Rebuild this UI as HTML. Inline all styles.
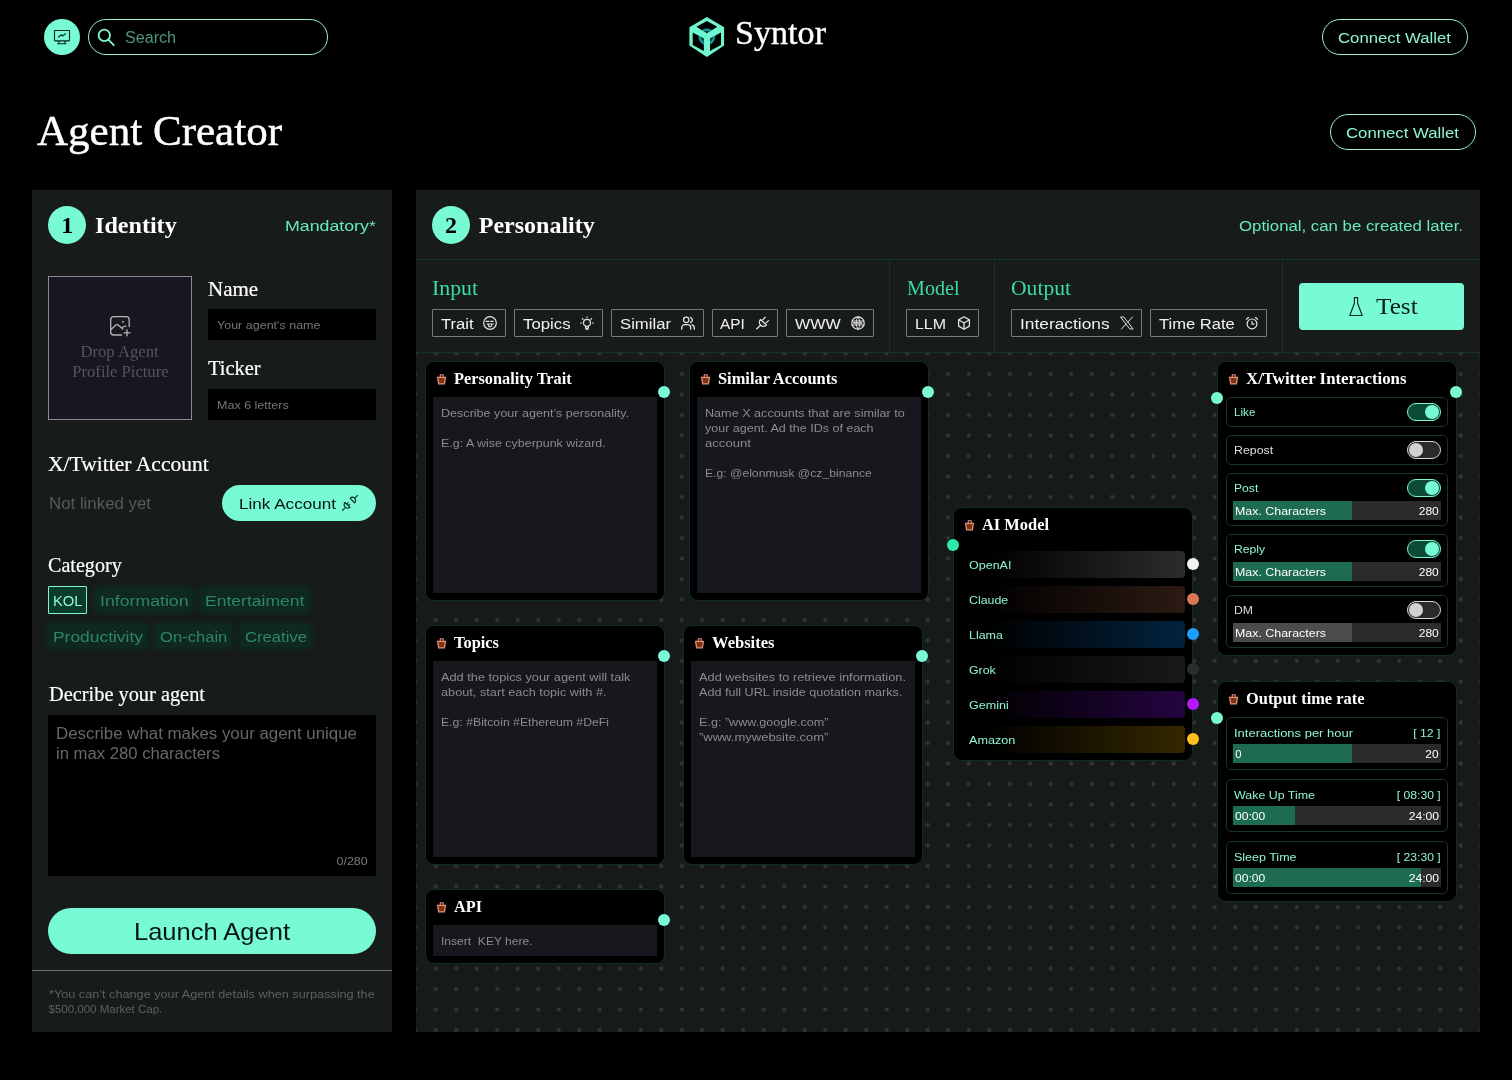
<!DOCTYPE html>
<html lang="en"><head><meta charset="utf-8"><title>Syntor – Agent Creator</title>
<style>
*{box-sizing:border-box;margin:0;padding:0}
html,body{width:1512px;height:1080px;background:#000;overflow:hidden}
body{position:relative;font-family:"Liberation Sans",sans-serif;color:#fff}
#app{position:absolute;left:0;top:0;width:1512px;height:1080px;will-change:transform}
#app div,#app svg,#app span.t{position:absolute}
.t{white-space:pre;display:block;transform-origin:left center}
.s{font-family:"Liberation Sans",sans-serif}
.f{font-family:"Liberation Serif",serif}
.pill{border:1px solid #9aefd6;border-radius:18px}
.tb{border:1px solid #777b7a;border-radius:1px}
.node{background:#000;border-radius:8px;box-shadow:0 0 0 1px #102c24}
.area{background:#17171e}
.port{width:12px;height:12px;border-radius:50%;background:#78fbd5}
.row{border:1px solid #16352b;border-radius:5px}
.bar{background:#2b2b2b}
</style></head><body><div id="app">
<div style="left:44px;top:19px;width:36px;height:36px;border-radius:50%;background:#78fbd5"></div>
<svg style="left:52px;top:28px" width="20" height="18" viewBox="52 28 20 18" fill="none" stroke="#08241b" stroke-width="1.1">
<rect x="54.5" y="30.5" width="15" height="10.4" rx="0.6"/>
<path d="M58.9 41v2.6M64.9 41v2.6M57.3 43.7h9.2" />
<path d="M58.3 37.2l3-2.4 1.4 1.2 3.2-2.6" stroke-width="1.2"/></svg>
<div class="pill" style="left:88px;top:19px;width:240px;height:36px;"></div>
<svg style="left:95px;top:27px" width="22" height="22" viewBox="95 27 22 22" fill="none" stroke="#86f6d6" stroke-width="1.8" stroke-linecap="round">
<circle cx="104.3" cy="35.4" r="5.7"/><path d="M108.6 39.8l5.2 5.4"/></svg>
<span class="t s" style="left:124.60px;top:28px;font-size:16px;line-height:20px;color:#4f957f;transform:scaleX(1.0059);">Search</span>
<svg style="left:686px;top:14px" width="42" height="46" viewBox="686 14 42 46">
<defs><radialGradient id="rg" cx="0.5" cy="0.5" r="0.5"><stop offset="0.45" stop-color="#0c5a5c" stop-opacity="0.25"/><stop offset="0.8" stop-color="#19b9b4"/><stop offset="1" stop-color="#19b9b4" stop-opacity="0"/></radialGradient></defs>
<polygon points="706.85,17.1 724.1,27.2 724.1,45.6 706.85,56.9 689.4,45.6 689.4,27.2" fill="#6ff6d0"/>
<g fill="#000">
<polygon points="696.4,26.75 706.85,21 717.3,26.75 706.85,33.3"/>
<polygon points="692.7,32.6 703.8,38.6 703.8,50.9 692.7,45"/>
<polygon points="710,38.6 721,32.6 721,45 710,50.9"/>
</g>
<clipPath id="faces"><polygon points="696.4,26.75 706.85,21 717.3,26.75 706.85,33.3"/><polygon points="692.7,32.6 703.8,38.6 703.8,50.9 692.7,45"/><polygon points="710,38.6 721,32.6 721,45 710,50.9"/></clipPath>
<circle cx="706.85" cy="36.8" r="9" fill="url(#rg)" clip-path="url(#faces)"/>
</svg>
<span class="t f" style="left:735.20px;top:13px;font-size:33px;line-height:41px;color:#fff;transform:scaleX(1.0339);-webkit-text-stroke:0.35px #fff;">Syntor</span>
<div class="pill" style="left:1322px;top:19px;width:146px;height:36px;"></div>
<span class="t s" style="left:1338.30px;top:28px;font-size:15.5px;line-height:19px;color:#8ef3d3;transform:scaleX(1.0801);">Connect Wallet</span>
<div class="pill" style="left:1330px;top:114px;width:146px;height:36px;"></div>
<span class="t s" style="left:1346.30px;top:123px;font-size:15.5px;line-height:19px;color:#8ef3d3;transform:scaleX(1.0801);">Connect Wallet</span>
<span class="t f" style="left:37.00px;top:105px;font-size:41.5px;line-height:52px;color:#fff;transform:scaleX(1.0371);-webkit-text-stroke:0.45px #fff;">Agent Creator</span>
<div style="left:32px;top:190px;width:360px;height:842px;background:#171b1a"></div>
<div style="left:48px;top:205.5px;width:38px;height:38px;border-radius:50%;background:#78fbd5"></div>
<span class="t f" style="left:61.20px;top:210px;font-size:24px;line-height:30px;color:#000;font-weight:700;">1</span>
<span class="t f" style="left:95.20px;top:210px;font-size:24px;line-height:30px;color:#fff;font-weight:700;transform:scaleX(1.0044);">Identity</span>
<span class="t s" style="left:284.50px;top:216px;font-size:15.5px;line-height:19px;color:#67eac2;transform:scaleX(1.1455);">Mandatory*</span>
<div style="left:48px;top:276px;width:144px;height:144px;background:#18171f;border:1px solid #8a8a8a"></div>
<svg style="left:108px;top:314px" width="24" height="24" viewBox="108 314 24 24" fill="none" stroke="#b4b4b8" stroke-width="1.3" stroke-linecap="round" stroke-linejoin="round">
<path d="M121.5 335h-7.8a3 3 0 0 1-3-3v-12.3a3 3 0 0 1 3-3h12.5a3 3 0 0 1 3 3v6.8"/>
<path d="M111 329.6l5.3-4.9c.5-.45 1.1-.45 1.6 0l4.9 4.3M122.3 327.6c1-1.1 2.2-1.5 3.5-1.4"/>
<circle cx="123" cy="321.8" r="0.6" fill="#b4b4b8" stroke-width="0.8"/>
<path d="M127 329.8v6M124 332.8h6" stroke-width="1.3"/></svg>
<span class="t f" style="left:82.45px;top:342px;font-size:16px;line-height:20px;color:#54545e;transform:scaleX(1.0425);transform-origin:center center;">Drop Agent</span>
<span class="t f" style="left:73.56px;top:362px;font-size:16px;line-height:20px;color:#54545e;transform:scaleX(1.0358);transform-origin:center center;">Profile Picture</span>
<span class="t f" style="left:208.00px;top:276px;font-size:20.7px;line-height:26px;color:#fff;transform:scaleX(1.0161);-webkit-text-stroke:0.2px #fff;">Name</span>
<div style="left:208px;top:309px;width:168px;height:31px;background:#000"></div>
<span class="t s" style="left:216.50px;top:318px;font-size:11.5px;line-height:14px;color:#757575;transform:scaleX(1.088);">Your agent's name</span>
<span class="t f" style="left:208.00px;top:355px;font-size:20.7px;line-height:26px;color:#fff;transform:scaleX(0.9875);-webkit-text-stroke:0.2px #fff;">Ticker</span>
<div style="left:208px;top:389px;width:168px;height:31px;background:#000"></div>
<span class="t s" style="left:216.50px;top:398px;font-size:11.5px;line-height:14px;color:#757575;transform:scaleX(1.0892);">Max 6 letters</span>
<span class="t f" style="left:48.00px;top:451px;font-size:20.7px;line-height:26px;color:#fff;transform:scaleX(1.0425);-webkit-text-stroke:0.2px #fff;">X/Twitter Account</span>
<span class="t s" style="left:48.60px;top:494px;font-size:16px;line-height:20px;color:#565a59;transform:scaleX(1.0522);">Not linked yet</span>
<div style="left:222px;top:485px;width:154px;height:36px;border-radius:18px;background:#78fbd5"></div>
<span class="t s" style="left:238.50px;top:494px;font-size:15.5px;line-height:19px;color:#06150f;transform:scaleX(1.1034);">Link Account</span>
<svg style="left:342px;top:495px" width="16" height="16" viewBox="0 0 16 16" fill="none" stroke="#0b2a20" stroke-width="1.15" stroke-linecap="round" stroke-linejoin="round">
<path d="M0.3 15.5L2.7 13.1"/>
<path d="M3.05 7.4L8 12.3A3.5 3.5 0 0 1 3.05 7.4z"/>
<path d="M4.9 8.9l1.2-1.2M6.5 10.5l1.2-1.2"/>
<path d="M8.2 3.25L12.6 7.9A3.2 3.2 0 0 0 8.2 3.25z"/>
<path d="M13.3 2.7L15.7 0.3"/></svg>
<span class="t f" style="left:48.00px;top:552px;font-size:20.7px;line-height:26px;color:#fff;transform:scaleX(0.9717);-webkit-text-stroke:0.2px #fff;">Category</span>
<div style="left:48px;top:586px;width:39px;height:28px;background:#0c3b2d;border:1px solid #7ff5d2;border-radius:1px"></div>
<span class="t s" style="left:52.50px;top:591px;font-size:15.5px;line-height:19px;color:#8df6d6;transform:scaleX(0.9511);">KOL</span>
<div style="left:96px;top:589px;width:96px;height:22px;background:#0f2920;box-shadow:0 0 5px 3px #0f2920;border-radius:3px"></div>
<span class="t s" style="left:99.80px;top:591px;font-size:15.5px;line-height:19px;color:#2c8669;transform:scaleX(1.1412);">Information</span>
<div style="left:201px;top:589px;width:107px;height:22px;background:#0f2920;box-shadow:0 0 5px 3px #0f2920;border-radius:3px"></div>
<span class="t s" style="left:205.20px;top:591px;font-size:15.5px;line-height:19px;color:#2c8669;transform:scaleX(1.131);">Entertaiment</span>
<div style="left:49px;top:625px;width:97px;height:22px;background:#0f2920;box-shadow:0 0 5px 3px #0f2920;border-radius:3px"></div>
<span class="t s" style="left:52.50px;top:627px;font-size:15.5px;line-height:19px;color:#2c8669;transform:scaleX(1.1232);">Productivity</span>
<div style="left:156px;top:625px;width:75px;height:22px;background:#0f2920;box-shadow:0 0 5px 3px #0f2920;border-radius:3px"></div>
<span class="t s" style="left:159.70px;top:627px;font-size:15.5px;line-height:19px;color:#2c8669;transform:scaleX(1.0698);">On-chain</span>
<div style="left:241px;top:625px;width:69px;height:22px;background:#0f2920;box-shadow:0 0 5px 3px #0f2920;border-radius:3px"></div>
<span class="t s" style="left:244.60px;top:627px;font-size:15.5px;line-height:19px;color:#2c8669;transform:scaleX(1.0742);">Creative</span>
<span class="t f" style="left:48.60px;top:681px;font-size:20.7px;line-height:26px;color:#fff;transform:scaleX(0.984);-webkit-text-stroke:0.2px #fff;">Decribe your agent</span>
<div style="left:48px;top:715px;width:328px;height:161px;background:#000"></div>
<span class="t s" style="left:56.40px;top:724px;font-size:16px;line-height:20px;color:#676767;transform:scaleX(1.0543);">Describe what makes your agent unique</span>
<span class="t s" style="left:56.40px;top:744px;font-size:16px;line-height:20px;color:#676767;transform:scaleX(1.0419);">in max 280 characters</span>
<span class="t s" style="left:338.92px;top:854px;font-size:11.5px;line-height:14px;color:#7a7a7a;transform:scaleX(1.0875);transform-origin:right center;">0/280</span>
<div style="left:48px;top:908px;width:328px;height:46px;border-radius:23px;background:#78fbd5"></div>
<span class="t s" style="left:134.00px;top:917px;font-size:24px;line-height:30px;color:#06150f;transform:scaleX(1.0626);">Launch Agent</span>
<div style="left:32px;top:970px;width:360px;height:1px;background:#6d7170"></div>
<span class="t s" style="left:48.50px;top:987px;font-size:11.5px;line-height:14px;color:#5c605f;transform:scaleX(1.1019);">*You can’t change your Agent details when surpassing the</span>
<span class="t s" style="left:48.50px;top:1002px;font-size:11.5px;line-height:14px;color:#5c605f;">$500,000 Market Cap.</span>
<div style="left:416px;top:190px;width:1064px;height:842px;background:#171b1a;overflow:hidden"></div>
<div style="left:416px;top:353px;width:1064px;height:679px;background-color:#161a19;background-image:radial-gradient(circle at 50% 50%, #313635 0, #313635 1.6px, rgba(49,54,53,0) 2.5px);background-size:20.5px 20.5px;background-position:-11.05px -9.75px"></div>
<div style="left:416px;top:259px;width:1064px;height:1px;background:#15342a"></div>
<div style="left:416px;top:352px;width:1064px;height:1px;background:#15342a"></div>
<div style="left:889px;top:260px;width:1px;height:92px;background:#15342a"></div>
<div style="left:994px;top:260px;width:1px;height:92px;background:#15342a"></div>
<div style="left:1282px;top:260px;width:1px;height:92px;background:#15342a"></div>
<div style="left:432px;top:205.5px;width:38px;height:38px;border-radius:50%;background:#78fbd5"></div>
<span class="t f" style="left:445.00px;top:210px;font-size:24px;line-height:30px;color:#000;font-weight:700;">2</span>
<span class="t f" style="left:478.80px;top:210px;font-size:24px;line-height:30px;color:#fff;font-weight:700;">Personality</span>
<span class="t s" style="left:1239.30px;top:216px;font-size:15.5px;line-height:19px;color:#67eac2;transform:scaleX(1.0831);">Optional, can be created later.</span>
<span class="t f" style="left:432.40px;top:275px;font-size:20.7px;line-height:26px;color:#3ddba8;transform:scaleX(1.0533);">Input</span>
<span class="t f" style="left:907.00px;top:275px;font-size:20.7px;line-height:26px;color:#3ddba8;transform:scaleX(0.9719);">Model</span>
<span class="t f" style="left:1011.40px;top:275px;font-size:20.7px;line-height:26px;color:#3ddba8;transform:scaleX(1.044);">Output</span>
<div class="tb" style="left:432px;top:309px;width:74px;height:28px;"></div>
<span class="t s" style="left:440.80px;top:314px;font-size:15.5px;line-height:19px;color:#f2f2f2;transform:scaleX(1.0743);">Trait</span>
<svg style="left:483px;top:316px" width="14" height="14" viewBox="0 0 14 14" fill="none" stroke="#e4e4e4" stroke-width="1.3" stroke-linecap="round" stroke-linejoin="round"><circle cx="7" cy="7" r="6.3" stroke-width="1.2"/><path d="M3 5.4h3M7.8 5.4h2.3M4 8h6.3M5.3 8.1v1a1.7 1.7 0 0 0 3.4 0v-1" stroke-width="1.15"/></svg>
<div class="tb" style="left:514px;top:309px;width:89px;height:28px;"></div>
<span class="t s" style="left:522.70px;top:314px;font-size:15.5px;line-height:19px;color:#f2f2f2;transform:scaleX(1.0834);">Topics</span>
<svg style="left:580px;top:316px" width="14" height="14" viewBox="0 0 14 14" fill="none" stroke="#e4e4e4" stroke-width="1.3" stroke-linecap="round" stroke-linejoin="round"><circle cx="7" cy="6.8" r="3.5" stroke-width="1.2"/><path d="M5.6 10.2v1.7a1.4 1.4 0 0 0 2.8 0v-1.7M6.4 12h1.2" stroke-width="1.15"/><path d="M7 .7v1M2.3 2.5l.8.8M11.7 2.5l-.8.8M.6 7h1M12.4 7h1" stroke-width="1.1"/></svg>
<div class="tb" style="left:611px;top:309px;width:93px;height:28px;"></div>
<span class="t s" style="left:619.70px;top:314px;font-size:15.5px;line-height:19px;color:#f2f2f2;transform:scaleX(1.0765);">Similar</span>
<svg style="left:681px;top:316px" width="14" height="14" viewBox="0 0 14 14" fill="none" stroke="#e4e4e4" stroke-width="1.3" stroke-linecap="round" stroke-linejoin="round"><circle cx="5.2" cy="3.9" r="2.7"/><path d="M.7 13.2v-1.3a3.2 3.2 0 0 1 3.2-3.2h2.6a3.2 3.2 0 0 1 3.2 3.2v1.3"/><path d="M9.4 1.3a2.7 2.7 0 0 1 0 5.2M13.3 13.2v-1.3a3.2 3.2 0 0 0-2.3-3.1"/></svg>
<div class="tb" style="left:712px;top:309px;width:66px;height:28px;"></div>
<span class="t s" style="left:720.40px;top:314px;font-size:15.5px;line-height:19px;color:#f2f2f2;transform:scaleX(0.9926);">API</span>
<svg style="left:755.5px;top:316px" width="14" height="14" viewBox="0 0 14 14" fill="none" stroke="#e4e4e4" stroke-width="1.3" stroke-linecap="round" stroke-linejoin="round"><path d="M4.5 3.5L10.4 9A4 4 0 0 1 4.5 3.5z"/><path d="M4.4 9.5L.5 12.9M6.9 3.6l2.3-2.3M10.1 6.9l2.4-2.3"/></svg>
<div class="tb" style="left:786px;top:309px;width:88px;height:28px;"></div>
<span class="t s" style="left:795.00px;top:314px;font-size:15.5px;line-height:19px;color:#f2f2f2;transform:scaleX(1.0389);">WWW</span>
<svg style="left:851px;top:316px" width="14" height="14" viewBox="0 0 14 14" fill="none" stroke="#e4e4e4" stroke-width="1.3" stroke-linecap="round" stroke-linejoin="round"><circle cx="7" cy="7" r="6.2" stroke-width="1.2"/><path d="M.9 5h12.2M.9 9h12.2M7 .8c-2.5 2.6-2.5 9.8 0 12.4M7 .8c2.5 2.6 2.5 9.8 0 12.4" stroke-width=".95"/><path d="M2.4 6.1l.55 1.8.55-1.8.55 1.8.55-1.8M5.6 6.1l.55 1.8.55-1.8.55 1.8.55-1.8M8.9 6.1l.55 1.8.55-1.8.55 1.8.55-1.8" stroke-width=".75"/></svg>
<div class="tb" style="left:906px;top:309px;width:73px;height:28px;"></div>
<span class="t s" style="left:915.00px;top:314px;font-size:15.5px;line-height:19px;color:#f2f2f2;transform:scaleX(1.028);">LLM</span>
<svg style="left:956.5px;top:316px" width="14" height="14" viewBox="0 0 14 14" fill="none" stroke="#e4e4e4" stroke-width="1.3" stroke-linecap="round" stroke-linejoin="round"><path d="M7 .8l5.4 3.1v6.2L7 13.2 1.6 10.1V3.9z"/><path d="M1.8 4L7 7l5.2-3M7 7v6"/></svg>
<div class="tb" style="left:1011px;top:309px;width:131px;height:28px;"></div>
<span class="t s" style="left:1019.80px;top:314px;font-size:15.5px;line-height:19px;color:#f2f2f2;transform:scaleX(1.118);">Interactions</span>
<svg style="left:1119.5px;top:316px" width="14" height="14" viewBox="0 0 14 14" fill="none" stroke="#e4e4e4" stroke-width="1.3" stroke-linecap="round" stroke-linejoin="round"><path d="M.9 1h2.9l9.3 12h-2.9zM12.4 1L7.9 6.1M6 8L1.5 13" stroke-width="1"/></svg>
<div class="tb" style="left:1150px;top:309px;width:117px;height:28px;"></div>
<span class="t s" style="left:1158.60px;top:314px;font-size:15.5px;line-height:19px;color:#f2f2f2;transform:scaleX(1.0688);">Time Rate</span>
<svg style="left:1244.5px;top:316px" width="14" height="14" viewBox="0 0 14 14" fill="none" stroke="#e4e4e4" stroke-width="1.3" stroke-linecap="round" stroke-linejoin="round"><circle cx="7" cy="7.9" r="4.9" stroke-width="1.2"/><path d="M7 5.3v2.8h2M1.5 3.3L3.5 1.5M12.5 3.3L10.5 1.5" stroke-width="1.15"/></svg>
<div style="left:1299px;top:283.4px;width:165px;height:46.2px;background:#78fbd5;border-radius:4px"></div>
<svg style="left:1347px;top:295px" width="18" height="23" viewBox="1347 295 18 23" fill="none" stroke="#0b2a20" stroke-width="1.15" stroke-linejoin="round">
<path d="M1353.8 297.6h4.2M1354.4 297.6v5.6l-4.6 12.3h12.4l-4.6-12.3v-5.6"/></svg>
<span class="t f" style="left:1376.30px;top:291px;font-size:24px;line-height:30px;color:#0b1f18;transform:scaleX(1.0515);">Test</span>
<div class="node" style="left:426px;top:362px;width:238px;height:238px;"></div>
<svg style="left:435.6px;top:372.8px" width="12" height="13" viewBox="-1 -1 12 13" fill="none" stroke="#e8917c" stroke-width="1.25" stroke-linejoin="round"><path d="M0.55 3.4H8.45L7.35 9.8H1.65z" fill="#7d3410"/><path d="M3.2 3.2V0.75h3v2.45" stroke-width="1.1"/></svg>
<span class="t f" style="left:453.60px;top:368px;font-size:16.5px;line-height:21px;color:#fff;font-weight:700;transform:scaleX(0.9891);">Personality Trait</span>
<div class="area" style="left:433px;top:397px;width:224px;height:196px;"></div>
<span class="t s" style="left:441.20px;top:406px;font-size:11.5px;line-height:14px;color:#8b8b8d;transform:scaleX(1.0931);">Describe your agent’s personality.</span>
<span class="t s" style="left:441.20px;top:436px;font-size:11.5px;line-height:14px;color:#8b8b8d;transform:scaleX(1.0826);">E.g: A wise cyberpunk wizard.</span>
<div class="port" style="left:658px;top:386px;"></div>
<div class="node" style="left:690px;top:362px;width:238px;height:238px;"></div>
<svg style="left:699.6px;top:372.8px" width="12" height="13" viewBox="-1 -1 12 13" fill="none" stroke="#e8917c" stroke-width="1.25" stroke-linejoin="round"><path d="M0.55 3.4H8.45L7.35 9.8H1.65z" fill="#7d3410"/><path d="M3.2 3.2V0.75h3v2.45" stroke-width="1.1"/></svg>
<span class="t f" style="left:717.60px;top:368px;font-size:16.5px;line-height:21px;color:#fff;font-weight:700;transform:scaleX(0.9938);">Similar Accounts</span>
<div class="area" style="left:697px;top:397px;width:224px;height:196px;"></div>
<span class="t s" style="left:705.20px;top:406px;font-size:11.5px;line-height:14px;color:#8b8b8d;transform:scaleX(1.0968);">Name X accounts that are similar to</span>
<span class="t s" style="left:705.20px;top:421px;font-size:11.5px;line-height:14px;color:#8b8b8d;transform:scaleX(1.0897);">your agent. Ad the IDs of each</span>
<span class="t s" style="left:705.20px;top:436px;font-size:11.5px;line-height:14px;color:#8b8b8d;transform:scaleX(1.1395);">account</span>
<span class="t s" style="left:705.20px;top:466px;font-size:11.5px;line-height:14px;color:#8b8b8d;transform:scaleX(1.0584);">E.g: @elonmusk @cz_binance</span>
<div class="port" style="left:922px;top:386px;"></div>
<div class="node" style="left:426px;top:626px;width:238px;height:238px;"></div>
<svg style="left:435.6px;top:636.8px" width="12" height="13" viewBox="-1 -1 12 13" fill="none" stroke="#e8917c" stroke-width="1.25" stroke-linejoin="round"><path d="M0.55 3.4H8.45L7.35 9.8H1.65z" fill="#7d3410"/><path d="M3.2 3.2V0.75h3v2.45" stroke-width="1.1"/></svg>
<span class="t f" style="left:453.60px;top:632px;font-size:16.5px;line-height:21px;color:#fff;font-weight:700;transform:scaleX(0.9945);">Topics</span>
<div class="area" style="left:433px;top:661px;width:224px;height:196px;"></div>
<span class="t s" style="left:441.20px;top:670px;font-size:11.5px;line-height:14px;color:#8b8b8d;transform:scaleX(1.1102);">Add the topics your agent will talk</span>
<span class="t s" style="left:441.20px;top:685px;font-size:11.5px;line-height:14px;color:#8b8b8d;transform:scaleX(1.107);">about, start each topic with #.</span>
<span class="t s" style="left:441.20px;top:715px;font-size:11.5px;line-height:14px;color:#8b8b8d;transform:scaleX(1.064);">E.g: #Bitcoin #Ethereum #DeFi</span>
<div class="port" style="left:658px;top:650px;"></div>
<div class="node" style="left:684px;top:626px;width:238px;height:238px;"></div>
<svg style="left:693.6px;top:636.8px" width="12" height="13" viewBox="-1 -1 12 13" fill="none" stroke="#e8917c" stroke-width="1.25" stroke-linejoin="round"><path d="M0.55 3.4H8.45L7.35 9.8H1.65z" fill="#7d3410"/><path d="M3.2 3.2V0.75h3v2.45" stroke-width="1.1"/></svg>
<span class="t f" style="left:711.60px;top:632px;font-size:16.5px;line-height:21px;color:#fff;font-weight:700;transform:scaleX(1.0025);">Websites</span>
<div class="area" style="left:691px;top:661px;width:224px;height:196px;"></div>
<span class="t s" style="left:699.20px;top:670px;font-size:11.5px;line-height:14px;color:#8b8b8d;transform:scaleX(1.1128);">Add websites to retrieve information.</span>
<span class="t s" style="left:699.20px;top:685px;font-size:11.5px;line-height:14px;color:#8b8b8d;transform:scaleX(1.0959);">Add full URL inside quotation marks.</span>
<span class="t s" style="left:699.20px;top:715px;font-size:11.5px;line-height:14px;color:#8b8b8d;transform:scaleX(1.0943);">E.g: ”www.google.com”</span>
<span class="t s" style="left:699.20px;top:730px;font-size:11.5px;line-height:14px;color:#8b8b8d;transform:scaleX(1.1312);">”www.mywebsite.com”</span>
<div class="port" style="left:916px;top:650px;"></div>
<div class="node" style="left:426px;top:890px;width:238px;height:73px;"></div>
<svg style="left:435.6px;top:900.8px" width="12" height="13" viewBox="-1 -1 12 13" fill="none" stroke="#e8917c" stroke-width="1.25" stroke-linejoin="round"><path d="M0.55 3.4H8.45L7.35 9.8H1.65z" fill="#7d3410"/><path d="M3.2 3.2V0.75h3v2.45" stroke-width="1.1"/></svg>
<span class="t f" style="left:453.60px;top:896px;font-size:16.5px;line-height:21px;color:#fff;font-weight:700;transform:scaleX(0.9852);">API</span>
<div class="area" style="left:433px;top:925px;width:224px;height:31px;"></div>
<span class="t s" style="left:441.20px;top:934px;font-size:11.5px;line-height:14px;color:#8b8b8d;transform:scaleX(1.0484);">Insert  KEY here.</span>
<div class="port" style="left:658px;top:914px;"></div>
<div class="node" style="left:954px;top:508px;width:238px;height:252px;"></div>
<svg style="left:963.6px;top:518.8px" width="12" height="13" viewBox="-1 -1 12 13" fill="none" stroke="#e8917c" stroke-width="1.25" stroke-linejoin="round"><path d="M0.55 3.4H8.45L7.35 9.8H1.65z" fill="#7d3410"/><path d="M3.2 3.2V0.75h3v2.45" stroke-width="1.1"/></svg>
<span class="t f" style="left:981.60px;top:514px;font-size:16.5px;line-height:21px;color:#fff;font-weight:700;transform:scaleX(0.9944);">AI Model</span>
<div class="port" style="left:947px;top:538.5px;background:#2deaa6"></div>
<div style="left:962px;top:551px;width:223px;height:27px;border-radius:4px;background:linear-gradient(90deg,#000 0%,#000 12%,#2c2c2c 100%)"></div>
<span class="t s" style="left:969.20px;top:558px;font-size:11.5px;line-height:14px;color:#8ef3d3;transform:scaleX(1.0872);">OpenAI</span>
<div class="port" style="left:1186.5px;top:557.8px;background:#f1f1f1"></div>
<div style="left:962px;top:586px;width:223px;height:27px;border-radius:4px;background:linear-gradient(90deg,#000 0%,#000 12%,#2c1a13 100%)"></div>
<span class="t s" style="left:969.20px;top:593px;font-size:11.5px;line-height:14px;color:#8ef3d3;transform:scaleX(1.0754);">Claude</span>
<div class="port" style="left:1186.5px;top:592.8px;background:#d97757"></div>
<div style="left:962px;top:621px;width:223px;height:27px;border-radius:4px;background:linear-gradient(90deg,#000 0%,#000 12%,#02233e 100%)"></div>
<span class="t s" style="left:969.20px;top:628px;font-size:11.5px;line-height:14px;color:#8ef3d3;transform:scaleX(1.0789);">Llama</span>
<div class="port" style="left:1186.5px;top:627.8px;background:#1a9fff"></div>
<div style="left:962px;top:656px;width:223px;height:27px;border-radius:4px;background:linear-gradient(90deg,#000 0%,#000 12%,#191919 100%)"></div>
<span class="t s" style="left:969.20px;top:663px;font-size:11.5px;line-height:14px;color:#8ef3d3;transform:scaleX(1.0754);">Grok</span>
<div class="port" style="left:1186.5px;top:662.8px;background:#2a2f2e"></div>
<div style="left:962px;top:691px;width:223px;height:27px;border-radius:4px;background:linear-gradient(90deg,#000 0%,#000 12%,#250541 100%)"></div>
<span class="t s" style="left:969.20px;top:698px;font-size:11.5px;line-height:14px;color:#8ef3d3;transform:scaleX(1.0895);">Gemini</span>
<div class="port" style="left:1186.5px;top:697.8px;background:#b517ff"></div>
<div style="left:962px;top:726px;width:223px;height:27px;border-radius:4px;background:linear-gradient(90deg,#000 0%,#000 12%,#352800 100%)"></div>
<span class="t s" style="left:969.20px;top:733px;font-size:11.5px;line-height:14px;color:#8ef3d3;transform:scaleX(1.0999);">Amazon</span>
<div class="port" style="left:1186.5px;top:732.8px;background:#ffc01c"></div>
<div class="node" style="left:1218px;top:362px;width:238px;height:293px;"></div>
<svg style="left:1227.6px;top:372.8px" width="12" height="13" viewBox="-1 -1 12 13" fill="none" stroke="#e8917c" stroke-width="1.25" stroke-linejoin="round"><path d="M0.55 3.4H8.45L7.35 9.8H1.65z" fill="#7d3410"/><path d="M3.2 3.2V0.75h3v2.45" stroke-width="1.1"/></svg>
<span class="t f" style="left:1245.60px;top:368px;font-size:16.5px;line-height:21px;color:#fff;font-weight:700;transform:scaleX(1.0191);">X/Twitter Interactions</span>
<div class="port" style="left:1211px;top:391.5px;"></div>
<div class="port" style="left:1450px;top:386px;"></div>
<div class="row" style="left:1226px;top:397px;width:222px;height:30px;"></div>
<span class="t s" style="left:1233.80px;top:405px;font-size:11px;line-height:14px;color:#8ef3d3;transform:scaleX(1.0601);">Like</span>
<div style="left:1407px;top:403px;width:34px;height:18px;border-radius:9px;background:#0d4a38;border:1px solid #78fbd5"></div>
<div style="left:1425px;top:405px;width:14px;height:14px;border-radius:50%;background:#78fbd5"></div>
<div class="row" style="left:1226px;top:435px;width:222px;height:30px;"></div>
<span class="t s" style="left:1233.80px;top:443px;font-size:11px;line-height:14px;color:#dcdcdc;transform:scaleX(1.1216);">Repost</span>
<div style="left:1407px;top:441px;width:34px;height:18px;border-radius:9px;background:#2b2b2b;border:1px solid #d6d6d6"></div>
<div style="left:1409px;top:443px;width:14px;height:14px;border-radius:50%;background:#d2d2d2"></div>
<div class="row" style="left:1226px;top:473px;width:222px;height:53px;"></div>
<span class="t s" style="left:1233.80px;top:481px;font-size:11px;line-height:14px;color:#8ef3d3;transform:scaleX(1.1038);">Post</span>
<div style="left:1407px;top:479px;width:34px;height:18px;border-radius:9px;background:#0d4a38;border:1px solid #78fbd5"></div>
<div style="left:1425px;top:481px;width:14px;height:14px;border-radius:50%;background:#78fbd5"></div>
<div class="bar" style="left:1233px;top:501px;width:208px;height:19px;"></div>
<div style="left:1233px;top:501px;width:119px;height:19px;background:#1e6b53"></div>
<span class="t s" style="left:1235.20px;top:504px;font-size:11.25px;line-height:14px;color:#fff;transform:scaleX(1.1026);">Max. Characters</span>
<span class="t s" style="left:1420.02px;top:504px;font-size:11.25px;line-height:14px;color:#fff;transform:scaleX(1.0702);transform-origin:right center;">280</span>
<div class="row" style="left:1226px;top:534px;width:222px;height:53px;"></div>
<span class="t s" style="left:1233.80px;top:542px;font-size:11px;line-height:14px;color:#8ef3d3;transform:scaleX(1.1058);">Reply</span>
<div style="left:1407px;top:540px;width:34px;height:18px;border-radius:9px;background:#0d4a38;border:1px solid #78fbd5"></div>
<div style="left:1425px;top:542px;width:14px;height:14px;border-radius:50%;background:#78fbd5"></div>
<div class="bar" style="left:1233px;top:562px;width:208px;height:19px;"></div>
<div style="left:1233px;top:562px;width:119px;height:19px;background:#1e6b53"></div>
<span class="t s" style="left:1235.20px;top:565px;font-size:11.25px;line-height:14px;color:#fff;transform:scaleX(1.1026);">Max. Characters</span>
<span class="t s" style="left:1420.02px;top:565px;font-size:11.25px;line-height:14px;color:#fff;transform:scaleX(1.0702);transform-origin:right center;">280</span>
<div class="row" style="left:1226px;top:595px;width:222px;height:53px;"></div>
<span class="t s" style="left:1233.80px;top:603px;font-size:11px;line-height:14px;color:#dcdcdc;transform:scaleX(1.1105);">DM</span>
<div style="left:1407px;top:601px;width:34px;height:18px;border-radius:9px;background:#2b2b2b;border:1px solid #d6d6d6"></div>
<div style="left:1409px;top:603px;width:14px;height:14px;border-radius:50%;background:#d2d2d2"></div>
<div class="bar" style="left:1233px;top:623px;width:208px;height:19px;"></div>
<div style="left:1233px;top:623px;width:119px;height:19px;background:#4b4b4b"></div>
<span class="t s" style="left:1235.20px;top:626px;font-size:11.25px;line-height:14px;color:#fff;transform:scaleX(1.1026);">Max. Characters</span>
<span class="t s" style="left:1420.02px;top:626px;font-size:11.25px;line-height:14px;color:#fff;transform:scaleX(1.0702);transform-origin:right center;">280</span>
<div class="node" style="left:1218px;top:682px;width:238px;height:219px;"></div>
<svg style="left:1227.6px;top:692.8px" width="12" height="13" viewBox="-1 -1 12 13" fill="none" stroke="#e8917c" stroke-width="1.25" stroke-linejoin="round"><path d="M0.55 3.4H8.45L7.35 9.8H1.65z" fill="#7d3410"/><path d="M3.2 3.2V0.75h3v2.45" stroke-width="1.1"/></svg>
<span class="t f" style="left:1245.60px;top:688px;font-size:16.5px;line-height:21px;color:#fff;font-weight:700;transform:scaleX(0.9945);">Output time rate</span>
<div class="port" style="left:1211px;top:712px;"></div>
<div class="row" style="left:1226px;top:717px;width:222px;height:53px;"></div>
<span class="t s" style="left:1233.50px;top:726px;font-size:11px;line-height:14px;color:#8ef3d3;transform:scaleX(1.1795);">Interactions per hour</span>
<span class="t s" style="left:1416.23px;top:726px;font-size:11px;line-height:14px;color:#8ef3d3;transform:scaleX(1.1157);transform-origin:right center;">[ 12 ]</span>
<div class="bar" style="left:1233px;top:744px;width:208px;height:19px;"></div>
<div style="left:1233px;top:744px;width:119px;height:19px;background:#1e6b53"></div>
<span class="t s" style="left:1235.20px;top:747px;font-size:11.25px;line-height:14px;color:#fff;">0</span>
<span class="t s" style="left:1426.28px;top:747px;font-size:11.25px;line-height:14px;color:#fff;transform:scaleX(1.0547);transform-origin:right center;">20</span>
<div class="row" style="left:1226px;top:779px;width:222px;height:53px;"></div>
<span class="t s" style="left:1233.50px;top:788px;font-size:11px;line-height:14px;color:#8ef3d3;transform:scaleX(1.1292);">Wake Up Time</span>
<span class="t s" style="left:1400.93px;top:788px;font-size:11px;line-height:14px;color:#8ef3d3;transform:scaleX(1.1065);transform-origin:right center;">[ 08:30 ]</span>
<div class="bar" style="left:1233px;top:806px;width:208px;height:19px;"></div>
<div style="left:1233px;top:806px;width:62px;height:19px;background:#1e6b53"></div>
<span class="t s" style="left:1235.20px;top:809px;font-size:11.25px;line-height:14px;color:#fff;transform:scaleX(1.0761);">00:00</span>
<span class="t s" style="left:1410.64px;top:809px;font-size:11.25px;line-height:14px;color:#fff;transform:scaleX(1.0832);transform-origin:right center;">24:00</span>
<div class="row" style="left:1226px;top:841px;width:222px;height:53px;"></div>
<span class="t s" style="left:1233.50px;top:850px;font-size:11px;line-height:14px;color:#8ef3d3;transform:scaleX(1.1357);">Sleep Time</span>
<span class="t s" style="left:1400.93px;top:850px;font-size:11px;line-height:14px;color:#8ef3d3;transform:scaleX(1.1065);transform-origin:right center;">[ 23:30 ]</span>
<div class="bar" style="left:1233px;top:868px;width:208px;height:19px;"></div>
<div style="left:1233px;top:868px;width:188px;height:19px;background:#1e6b53"></div>
<span class="t s" style="left:1235.20px;top:871px;font-size:11.25px;line-height:14px;color:#fff;transform:scaleX(1.0761);">00:00</span>
<span class="t s" style="left:1410.64px;top:871px;font-size:11.25px;line-height:14px;color:#fff;transform:scaleX(1.0832);transform-origin:right center;">24:00</span>
</div></body></html>
